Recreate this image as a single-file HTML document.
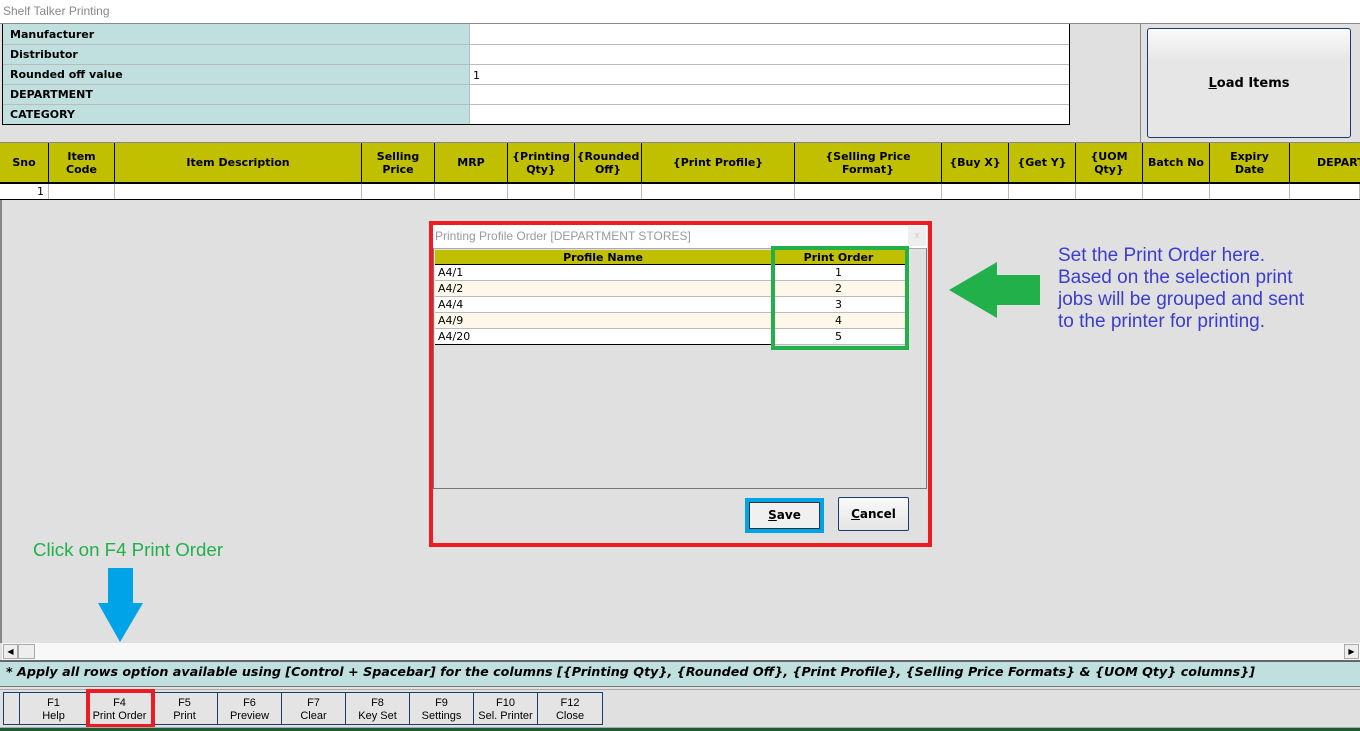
<!DOCTYPE html>
<html><head><meta charset="utf-8"><style>
*{box-sizing:border-box;margin:0;padding:0}
body{width:1360px;height:731px;overflow:hidden;background:#e0e0e0;position:relative;font-family:"DejaVu Sans","Liberation Sans",sans-serif;font-size:11px;color:#000}
.a{position:absolute}
.lab{font-weight:bold;font-size:11px;padding-left:7px;line-height:19px}
.hd{position:absolute;top:143px;height:41px;background:#c0c000;border-right:1px solid #000;border-bottom:2px solid #000;font-weight:bold;font-size:11px;display:flex;align-items:center;justify-content:center;text-align:center;line-height:13px}
.cl{position:absolute;top:184px;height:15px;background:#fff;border-right:1px solid #bbb}
.fb{position:absolute;top:692px;height:33px;border:1px solid #1a3d6e;border-left:none;background:#e4e4e4;font-family:"Liberation Sans",sans-serif;font-size:11px;text-align:center;line-height:13px;padding-top:4px;color:#000}
.pr{position:absolute;left:435px;width:336px;height:16px;border-bottom:1px solid #bbb;padding-left:3px;line-height:15px;font-size:11px}
.po{position:absolute;left:771px;width:135px;height:16px;border-bottom:1px solid #bbb;text-align:center;line-height:15px;font-size:11px}
.bt{font-family:"Liberation Sans",sans-serif;font-size:19px;color:#3c3ccc;line-height:22px}
</style></head><body>
<div class="a" style="left:0;top:0;width:1360px;height:23px;background:#fff"></div>
<div class="a" style="left:3px;top:4px;font-family:'Liberation Sans',sans-serif;font-size:12px;color:#888">Shelf Talker Printing</div>
<div class="a" style="left:0;top:23px;width:1360px;height:1px;background:#888"></div>
<div class="a" style="left:1140px;top:24px;width:1px;height:119px;background:#888"></div>
<div class="a" style="left:2px;top:24px;width:1068px;height:101px;border:1px solid #000;border-top:none;background:#fff">
<div class="a" style="left:0;top:0;width:466px;height:100px;background:#c0e0e0"></div>
<div class="a lab" style="left:0;top:1px">Manufacturer</div>
<div class="a lab" style="left:0;top:21px">Distributor</div>
<div class="a lab" style="left:0;top:41px">Rounded off value</div>
<div class="a lab" style="left:0;top:61px">DEPARTMENT</div>
<div class="a lab" style="left:0;top:81px">CATEGORY</div>
<div class="a" style="left:470px;top:42px;line-height:19px">1</div>
<div class="a" style="left:0;top:20px;width:1066px;height:1px;background:#bbb"></div>
<div class="a" style="left:0;top:40px;width:1066px;height:1px;background:#bbb"></div>
<div class="a" style="left:0;top:60px;width:1066px;height:1px;background:#bbb"></div>
<div class="a" style="left:0;top:80px;width:1066px;height:1px;background:#bbb"></div>
<div class="a" style="left:466px;top:0;width:1px;height:100px;background:#bbb"></div>
</div>
<div class="a" style="left:1147px;top:28px;width:204px;height:110px;border:1px solid #1a3d6e;border-radius:3px;background:linear-gradient(#fafafa,#e6e6e6 30%,#e6e6e6);display:flex;align-items:center;justify-content:center;font-weight:bold;font-size:13px"><span><u>L</u>oad Items</span></div>
<div class="a" style="left:0;top:142px;width:1360px;height:1px;background:#888"></div>
<div class="hd" style="left:0;width:49px">Sno</div>
<div class="hd" style="left:49px;width:66px">Item<br>Code</div>
<div class="hd" style="left:115px;width:247px">Item Description</div>
<div class="hd" style="left:362px;width:73px">Selling<br>Price</div>
<div class="hd" style="left:435px;width:73px">MRP</div>
<div class="hd" style="left:508px;width:67px">{Printing<br>Qty}</div>
<div class="hd" style="left:575px;width:67px">{Rounded<br>Off}</div>
<div class="hd" style="left:642px;width:153px">{Print Profile}</div>
<div class="hd" style="left:795px;width:147px">{Selling Price<br>Format}</div>
<div class="hd" style="left:942px;width:67px">{Buy X}</div>
<div class="hd" style="left:1009px;width:67px">{Get Y}</div>
<div class="hd" style="left:1076px;width:67px">{UOM<br>Qty}</div>
<div class="hd" style="left:1143px;width:67px">Batch No</div>
<div class="hd" style="left:1210px;width:80px">Expiry<br>Date</div>
<div class="hd" style="left:1290px;width:90px;justify-content:flex-start;padding-left:27px">DEPARTMENT</div>
<div class="cl" style="left:0;width:49px;text-align:right;padding-right:4px;line-height:15px">1</div>
<div class="cl" style="left:49px;width:66px"></div><div class="cl" style="left:115px;width:247px"></div>
<div class="cl" style="left:362px;width:73px"></div><div class="cl" style="left:435px;width:73px"></div>
<div class="cl" style="left:508px;width:67px"></div><div class="cl" style="left:575px;width:67px"></div>
<div class="cl" style="left:642px;width:153px"></div><div class="cl" style="left:795px;width:147px"></div>
<div class="cl" style="left:942px;width:67px"></div><div class="cl" style="left:1009px;width:67px"></div>
<div class="cl" style="left:1076px;width:67px"></div><div class="cl" style="left:1143px;width:67px"></div>
<div class="cl" style="left:1210px;width:80px"></div><div class="cl" style="left:1290px;width:70px"></div>
<div class="a" style="left:0;top:199px;width:1360px;height:1px;background:#000"></div>
<div class="a" style="left:0;top:200px;width:2px;height:443px;background:#888"></div>
<div class="a" style="left:429px;top:221px;width:503px;height:326px;border:4px solid #ed1c24;background:#e0e0e0"></div>
<div class="a" style="left:433px;top:225px;width:494px;height:23px;background:#fff"></div>
<div class="a" style="left:435px;top:229px;font-family:'Liberation Sans',sans-serif;font-size:12px;color:#999">Printing Profile Order [DEPARTMENT STORES]</div>
<div class="a" style="left:908px;top:226px;width:18px;height:20px;background:#eee;color:#ccc;font-size:9px;text-align:center;line-height:20px">x</div>
<div class="a" style="left:433px;top:248px;width:494px;height:241px;border:1px solid #777;border-top:1px solid #aaa"></div>
<div class="a" style="left:435px;top:250px;width:471px;height:15px;background:#c0c000;border-bottom:1px solid #000"></div>
<div class="a" style="left:435px;top:250px;width:336px;text-align:center;font-weight:bold;line-height:15px">Profile Name</div>
<div class="a" style="left:771px;top:250px;width:135px;text-align:center;font-weight:bold;line-height:15px">Print Order</div>
<div class="pr" style="top:265px;background:#fff">A4/1</div><div class="po" style="top:265px;background:#fff">1</div>
<div class="pr" style="top:281px;background:#fdf8ea">A4/2</div><div class="po" style="top:281px;background:#fdf8ea">2</div>
<div class="pr" style="top:297px;background:#fff">A4/4</div><div class="po" style="top:297px;background:#fff">3</div>
<div class="pr" style="top:313px;background:#fdf8ea">A4/9</div><div class="po" style="top:313px;background:#fdf8ea">4</div>
<div class="pr" style="top:329px;background:#fff;border-bottom:1px solid #000">A4/20</div><div class="po" style="top:329px;background:#fff">5</div>
<div class="a" style="left:771px;top:246px;width:138px;height:104px;border:4px solid #22b04a"></div>
<div class="a" style="left:745px;top:498px;width:79px;height:35px;border:4px solid #00a2e8;background:#00a2e8"><div style="width:100%;height:100%;background:#f0f0f0;border:1px solid #333;font-weight:bold;font-size:12px;text-align:center;line-height:25px"><u>S</u>ave</div></div>
<div class="a" style="left:838px;top:497px;width:71px;height:34px;border:1px solid #1a3d6e;border-radius:2px;background:linear-gradient(#fafafa,#e4e4e4);font-weight:bold;font-size:12px;text-align:center;line-height:32px"><u>C</u>ancel</div>
<svg class="a" style="left:0;top:0" width="1360" height="731">
<polygon points="949,290 997,262 997,275 1040,275 1040,305 997,305 997,318" fill="#22b04a"/>
<polygon points="108,568 133,568 133,603 143,603 120,642 98,603 108,603" fill="#00a2e8"/>
</svg>
<div class="a bt" style="left:1058px;top:245px">Set the Print Order here.<br>Based on the selection print<br>jobs will be grouped and sent<br>to the printer for printing.</div>
<div class="a" style="left:33px;top:539px;font-family:'Liberation Sans',sans-serif;font-size:18.7px;color:#22b04a">Click on F4 Print Order</div>
<div class="a" style="left:2px;top:643px;width:1358px;height:17px;background:#f8f8f8"></div>
<div class="a" style="left:3px;top:644px;width:15px;height:15px;background:#eee;border:1px solid #aaa;font-size:8px;text-align:center;line-height:13px">◀</div>
<div class="a" style="left:18px;top:644px;width:17px;height:15px;background:#eee;border:1px solid #aaa"></div>
<div class="a" style="left:1344px;top:644px;width:15px;height:15px;background:#eee;border:1px solid #aaa;font-size:8px;text-align:center;line-height:13px">▶</div>
<div class="a" style="left:0;top:660px;width:1360px;height:27px;background:#c0e0e0;border-top:2px solid #666;border-bottom:1px solid #777"></div>
<div class="a" style="left:6px;top:662px;font-weight:bold;font-style:italic;font-size:12.7px;line-height:20px;white-space:nowrap">* Apply all rows option available using [Control + Spacebar] for the columns [{Printing Qty}, {Rounded Off}, {Print Profile}, {Selling Price Formats} &amp; {UOM Qty} columns}]</div>
<div class="a" style="left:0;top:689px;width:1360px;height:1px;background:#aaa"></div>
<div class="fb" style="left:3px;width:17px;border-left:1px solid #1a3d6e"></div>
<div class="fb" style="left:20px;width:68px">F1<br>Help</div>
<div class="fb" style="left:88px;width:64px">F4<br>Print Order</div>
<div class="fb" style="left:152px;width:66px">F5<br>Print</div>
<div class="fb" style="left:218px;width:64px">F6<br>Preview</div>
<div class="fb" style="left:282px;width:64px">F7<br>Clear</div>
<div class="fb" style="left:346px;width:64px">F8<br>Key Set</div>
<div class="fb" style="left:410px;width:64px">F9<br>Settings</div>
<div class="fb" style="left:474px;width:64px">F10<br>Sel. Printer</div>
<div class="fb" style="left:538px;width:65px">F12<br>Close</div>
<div class="a" style="left:86px;top:689px;width:69px;height:39px;border:4px solid #ed1c24"></div>
<div class="a" style="left:0;top:727px;width:1360px;height:1px;background:#aaa"></div>
<div class="a" style="left:0;top:728px;width:1360px;height:3px;background:#1e5a32"></div>
</body></html>
